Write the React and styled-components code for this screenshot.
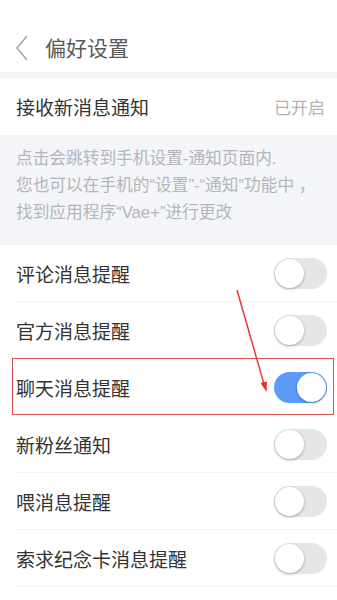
import styled, { createGlobalStyle } from 'styled-components';

const GlobalStyle = createGlobalStyle`
  html, body {
    margin: 0;
    padding: 0;
    background: #ffffff;
  }
  body {
    font-family: 'Noto Sans CJK SC', 'Noto Sans', sans-serif;
  }
`;

const Page = styled('div')`
  position: relative;
  width: 337px;
  height: 600px;
  overflow: hidden;
  background: #ffffff;
`;

const Header = styled('div')`
  height: 78px;
  display: flex;
  align-items: flex-end;
  padding: 0 0 10px 14px;
  box-sizing: border-box;
  border-bottom: 6px solid #f4f4f5;
  gap: 15px;
`;

const Title = styled('h1')`
  margin: 0;
  font-size: 21px;
  font-weight: 400;
  color: #5a5a5a;
  line-height: 30px;
`;

const Row = styled('div')`
  position: relative;
  height: 57px;
  display: flex;
  align-items: center;
  justify-content: space-between;
  padding: 0 10px 0 16px;
  box-sizing: border-box;
  &::after {
    content: '';
    position: absolute;
    left: 16px;
    right: 0;
    bottom: 0;
    height: 1px;
    background: ${(p) => (p.$last ? 'transparent' : '#f3f3f3')};
  }
  ${(p) =>
    p.$highlight &&
    `
    &::before {
      content: '';
      position: absolute;
      left: 12px;
      right: 3px;
      top: -1px;
      bottom: 1px;
      border: 1.5px solid #d9534f;
      pointer-events: none;
    }
  `}
`;

const Label = styled('span')`
  font-size: 19px;
  color: #333333;
`;

const Status = styled('span')`
  font-size: 17px;
  color: #b4b4b4;
  margin-right: 2px;
`;

const Info = styled('div')`
  background: #f3f5f8;
  height: 110px;
  padding: 10px 12px 0 16px;
  box-sizing: border-box;
  font-family: 'Liberation Sans', 'Noto Sans CJK SC', sans-serif;
  font-size: 16.7px;
  line-height: 27px;
  color: #b3b6ba;
  white-space: nowrap;
`;

const Track = styled('div')`
  position: relative;
  width: 53px;
  height: 31px;
  border-radius: 16px;
  background: ${(p) => (p.$on ? '#5d9cf6' : '#e6e6e6')};
  box-sizing: border-box;
`;

const Knob = styled('div')`
  position: absolute;
  top: 1px;
  left: ${(p) => (p.$on ? '23px' : '1px')};
  width: 29px;
  height: 29px;
  border-radius: 50%;
  background: #ffffff;
  box-shadow: 0 1px 3px rgba(0, 0, 0, 0.3);
`;

const Arrow = styled('svg')`
  position: absolute;
  left: 0;
  top: 0;
  pointer-events: none;
`;

function Toggle({ on }) {
  return (
    <Track $on={on}>
      <Knob $on={on} />
    </Track>
  );
}

const items = [
  { label: '评论消息提醒', on: false },
  { label: '官方消息提醒', on: false },
  { label: '聊天消息提醒', on: true, highlight: true },
  { label: '新粉丝通知', on: false },
  { label: '喂消息提醒', on: false },
  { label: '索求纪念卡消息提醒', on: false },
  { label: '', on: true },
];

export default function App() {
  return (
    <>
      <GlobalStyle />
      <Page>
        <Header>
          <svg width="16" height="28" viewBox="0 0 16 28">
            <path d="M13 2 L3 14 L13 26" fill="none" stroke="#a8a8a8" strokeWidth="1.6" />
          </svg>
          <Title>偏好设置</Title>
        </Header>
        <Row $last>
          <Label>接收新消息通知</Label>
          <Status>已开启</Status>
        </Row>
        <Info>
          点击会跳转到手机设置-通知页面内.
          <br />
          您也可以在手机的“设置”-“通知”功能中 ，
          <br />
          找到应用程序“Vae+”进行更改
        </Info>
        {items.map((it, i) => (
          <Row key={i} $highlight={it.highlight} $last={it.highlight || i === 1}>
            <Label>{it.label}</Label>
            <Toggle on={it.on} />
          </Row>
        ))}
        <Arrow width="337" height="600" viewBox="0 0 337 600">
          <line x1="237" y1="290" x2="264" y2="384" stroke="#e8302a" strokeWidth="1.4" />
          <path d="M266.5 392 L260.5 383 L267 381.5 Z" fill="#e8302a" />
        </Arrow>
      </Page>
    </>
  );
}
